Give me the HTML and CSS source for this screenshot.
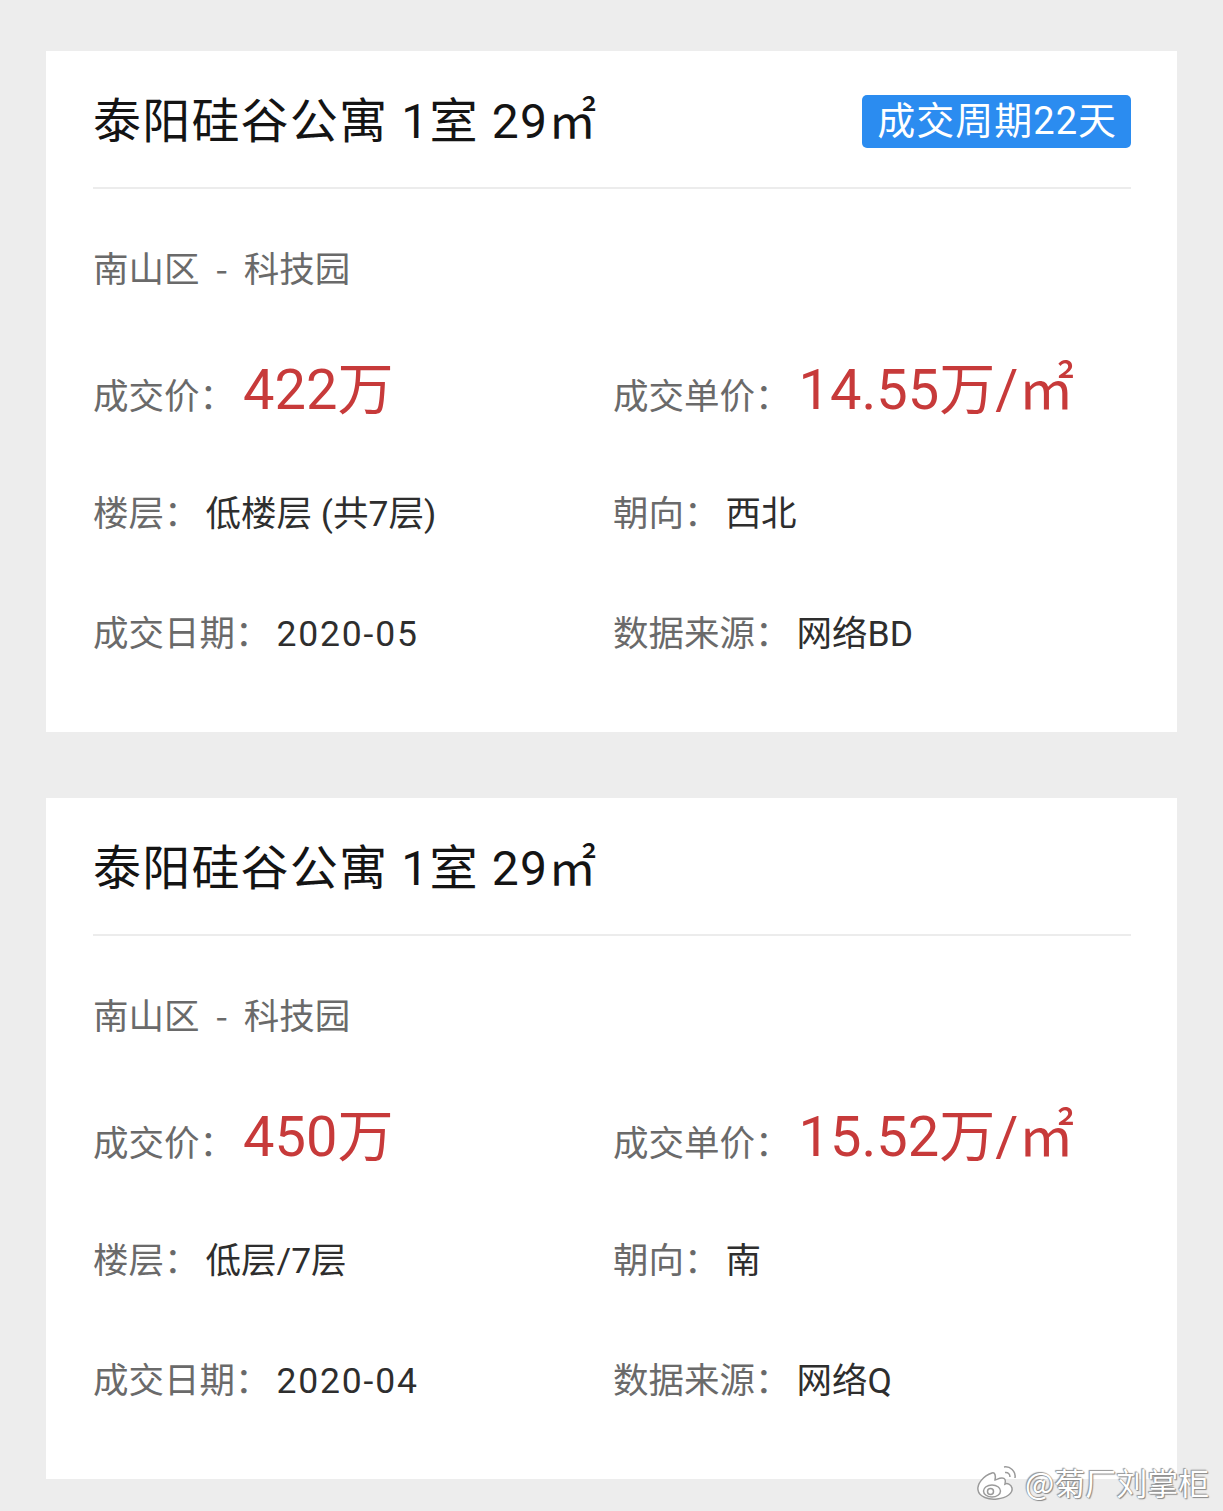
FILE: index.html
```html
<!DOCTYPE html>
<html lang="zh-CN">
<head>
<meta charset="utf-8">
<title>成交记录</title>
<link rel="stylesheet" href="styles.css">
</head>
<body>
<div class="page">
  <div class="card">
    <div class="head">
      <div class="title">泰阳硅谷公寓 1室 29㎡</div>
      <div class="badge">成交周期22天</div>
    </div>
    <div class="divider"></div>
    <div class="loc">南山区 - 科技园</div>
    <div class="grid">
      <div class="cell"><span class="label">成交价：</span><span class="price">422万</span></div>
      <div class="cell"><span class="label">成交单价：</span><span class="price">14.55万/㎡</span></div>
      <div class="cell"><span class="label">楼层：</span><span class="val">低楼层 (共7层)</span></div>
      <div class="cell"><span class="label">朝向：</span><span class="val">西北</span></div>
      <div class="cell"><span class="label">成交日期：</span><span class="val num">2020-05</span></div>
      <div class="cell"><span class="label">数据来源：</span><span class="val">网络BD</span></div>
    </div>
  </div>
  <div class="card">
    <div class="head">
      <div class="title">泰阳硅谷公寓 1室 29㎡</div>
    </div>
    <div class="divider"></div>
    <div class="loc">南山区 - 科技园</div>
    <div class="grid">
      <div class="cell"><span class="label">成交价：</span><span class="price">450万</span></div>
      <div class="cell"><span class="label">成交单价：</span><span class="price">15.52万/㎡</span></div>
      <div class="cell"><span class="label">楼层：</span><span class="val">低层/7层</span></div>
      <div class="cell"><span class="label">朝向：</span><span class="val">南</span></div>
      <div class="cell"><span class="label">成交日期：</span><span class="val num">2020-04</span></div>
      <div class="cell"><span class="label">数据来源：</span><span class="val">网络Q</span></div>
    </div>
  </div>
</div>
<div class="watermark">
  <svg class="wb" width="46" height="38" viewBox="0 0 46 38">
    <g fill="none" stroke="#9a9a9a" stroke-width="1.5">
      <path d="M17 10 C8 13 2 21 3 27 C4 34 14 37 22 36 C32 35 38 30 37 25 C36 21 32 20 30 21 C31 17 30 15 27 15 C24 15 21 17 20 17 C21 13 20 9 17 10 Z" fill="#ffffff"/>
      <ellipse cx="17" cy="28" rx="8.5" ry="6" fill="#ffffff"/>
      <circle cx="15.5" cy="28.5" r="3" fill="#ffffff"/>
      <path d="M29 4 C35 3 41 8 40 15" stroke="#ffffff" stroke-width="3.5"/>
      <path d="M29 4 C35 3 41 8 40 15"/>
      <path d="M30 9.5 C33 9 35 11 35 14" stroke="#ffffff" stroke-width="3"/>
      <path d="M30 9.5 C33 9 35 11 35 14"/>
    </g>
  </svg>
  <span class="wm-text">@菊厂刘掌柜</span>
</div>
</body>
</html>
```
FILE: styles.css
```css
* { box-sizing: border-box; }
html, body {
  margin: 0;
  padding: 0;
  background: #ededed;
}
body {
  font-family: Roboto, "Noto Sans CJK SC", sans-serif;
  width: 1223px;
  height: 1511px;
  position: relative;
  overflow: hidden;
}
.page {
  padding: 51px 46px 0 46px;
  display: flex;
  flex-direction: column;
  gap: 66px;
}
.card {
  background: #ffffff;
  padding: 44px 46px 42px 47px;
}
.head {
  height: 53px;
  display: flex;
  align-items: center;
  justify-content: space-between;
}
.title {
  font-size: 48px;
  line-height: 53px;
  color: #141414;
  letter-spacing: 1.2px;
}
.badge {
  height: 53px;
  line-height: 53px;
  padding: 0 14px 0 15px;
  background: #2b8cf0;
  color: #ffffff;
  font-size: 38px;
  letter-spacing: 1px;
  border-radius: 5px;
}
.divider {
  height: 2px;
  background: #ececec;
  margin-top: 39px;
}
.loc {
  margin-top: 61px;
  font-family: "Noto Sans CJK SC", sans-serif;
  font-size: 35.5px;
  line-height: 34px;
  color: #6a6a6a;
  word-spacing: 8px;
}
.grid {
  margin-top: 46px;
  display: grid;
  grid-template-columns: 520px 1fr;
  grid-template-rows: 120px 130px 110px;
}
.cell {
  display: flex;
  align-items: baseline;
  align-self: center;
}
.label {
  font-size: 35.5px;
  line-height: 1;
  color: #6a6a6a;
}
.val {
  font-size: 35.5px;
  line-height: 1;
  color: #2e2e2e;
  margin-left: 6px;
}
.val.num {
  letter-spacing: 1.8px;
}
.price {
  font-size: 56px;
  line-height: 1;
  color: #c73a3a;
  margin-left: 8px;
}
.watermark {
  position: absolute;
  left: 975px;
  top: 1458px;
  display: flex;
  align-items: center;
  gap: 4px;
}
.wm-text {
  font-family: "Noto Sans CJK SC", sans-serif;
  font-size: 31px;
  line-height: 48px;
  color: #ffffff;
  text-shadow: 0 0 1px #7a7a7a, 1px 1px 1px #8a8a8a, -1px -1px 1px #9a9a9a;
}
```
